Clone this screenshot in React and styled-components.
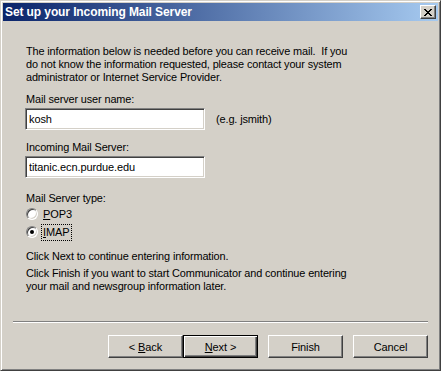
import React from 'react';
import styled, { createGlobalStyle, css } from 'styled-components';

const Global = createGlobalStyle`
  body {
    margin: 0;
    font-family: "Liberation Sans", Arial, sans-serif;
    font-size: 11px;
    color: #000;
  }
`

const Window = styled.div`
  width: 441px;
  height: 371px;
  box-sizing: border-box;
  background: #d4d0c8;
  border: 1px solid;
  border-color: #d4d0c8 #404040 #404040 #d4d0c8;
  box-shadow: inset 1px 1px #fff, inset -1px -1px #808080;
  padding: 2px;
  display: flex;
  flex-direction: column;
`
const TitleBar = styled.div`
  height: 18px;
  flex: none;
  background: linear-gradient(to right, #0a246a, #a6caf0);
  display: flex;
  align-items: center;
  justify-content: space-between;
  padding: 0 2px;
`
const TitleText = styled.span`
  color: #fff;
  font-weight: bold;
  font-size: 12px;
  letter-spacing: -0.1px;
`
const CloseButton = styled.div`
  width: 16px;
  height: 14px;
  box-sizing: border-box;
  background: #d4d0c8;
  border: 1px solid;
  border-color: #fff #404040 #404040 #fff;
  box-shadow: inset -1px -1px #808080;
  display: flex;
  align-items: center;
  justify-content: center;
  padding-top: 1px;
`
const Content = styled.div`
  padding: 24px 23px 0;
`
const Text = styled.div`
  font-size: 10.9px;
  letter-spacing: -0.12px;
  line-height: 13px;
  margin-top: ${p => p.$mt || 0}px;
`
const FieldRow = styled.div`
  display: flex;
  align-items: center;
  gap: 11px;
  margin-top: 2px;
  margin-left: -1px;
`
const TextBox = styled.input`
  width: 180px;
  height: 22px;
  box-sizing: border-box;
  margin: 0;
  padding: 0 3px;
  background: #fff;
  border: 1px solid;
  border-color: #808080 #fff #fff #808080;
  box-shadow: inset 1px 1px #404040, inset -1px -1px #d4d0c8;
  font: 11px "Liberation Sans", Arial, sans-serif;
  letter-spacing: -0.1px;
  color: #000;
  outline: none;
`
const Hint = styled.span`
  letter-spacing: -0.15px;
`
const RadioRow = styled.div`
  height: 18px;
  display: flex;
  align-items: center;
  gap: 4px;
`
const RadioCircle = styled.span`
  width: 12px;
  height: 12px;
  box-sizing: border-box;
  border-radius: 50%;
  background: #fff;
  border: 1px solid;
  border-color: #808080 #fff #fff #808080;
  box-shadow: inset 1px 1px #404040, inset -1px -1px #d4d0c8;
  display: inline-flex;
  align-items: center;
  justify-content: center;
  ${p => p.$checked && css`
    &::after {
      content: '';
      width: 4px;
      height: 4px;
      border-radius: 50%;
      background: #000;
    }
  `}
`
const RadioLabel = styled.span`
  line-height: 15px;
  padding: 0 1px;
  letter-spacing: -0.1px;
  outline: ${p => (p.$focus ? '1px dotted #000' : 'none')};
  outline-offset: 0;
`
const Footer = styled.div`
  margin-top: auto;
  padding: 0 10px 10px;
`
const Separator = styled.div`
  border-top: 1px solid #808080;
  border-bottom: 1px solid #fff;
`
const ButtonRow = styled.div`
  display: flex;
  justify-content: flex-end;
  gap: 10px;
  margin-top: 12px;
`
const ButtonPair = styled.div`
  display: flex;
`
const Button = styled.button`
  width: 75px;
  height: 23px;
  box-sizing: border-box;
  margin: 0;
  padding: 0;
  background: #d4d0c8;
  font: 11px "Liberation Sans", Arial, sans-serif;
  letter-spacing: -0.1px;
  color: #000;
  border: 1px solid;
  border-color: #fff #404040 #404040 #fff;
  box-shadow: inset -1px -1px #808080;
  ${p => p.$default && css`
    border-color: #000;
    box-shadow: inset 1px 1px #fff, inset -1px -1px #404040, inset -2px -2px #808080;
  `}
`

const CloseGlyph = () => (
  <svg width="8" height="7" viewBox="0 0 8 7" shapeRendering="crispEdges">
    <path
      fill="#000"
      d="M0 0h2v1H0zM6 0h2v1H6zM1 1h2v1H1zM5 1h2v1H5zM2 2h4v1H2zM3 3h2v1H3zM2 4h4v1H2zM1 5h2v1H1zM5 5h2v1H5zM0 6h2v1H0zM6 6h2v1H6z"
    />
  </svg>
)

export default function App() {
  return (
    <Window>
      <Global />
      <TitleBar>
        <TitleText>Set up your Incoming Mail Server</TitleText>
        <CloseButton><CloseGlyph /></CloseButton>
      </TitleBar>
      <Content>
        <Text>
          The information below is needed before you can receive mail.&nbsp; If you<br />
          do not know the information requested, please contact your system<br />
          administrator or Internet Service Provider.
        </Text>
        <Text $mt={9}>Mail server user name:</Text>
        <FieldRow>
          <TextBox readOnly value="kosh" />
          <Hint>(e.g. jsmith)</Hint>
        </FieldRow>
        <Text $mt={11}>Incoming Mail Server:</Text>
        <FieldRow>
          <TextBox readOnly value="titanic.ecn.purdue.edu" />
        </FieldRow>
        <Text $mt={14}>Mail Server type:</Text>
        <RadioRow>
          <RadioCircle />
          <RadioLabel><u>P</u>OP3</RadioLabel>
        </RadioRow>
        <RadioRow>
          <RadioCircle $checked />
          <RadioLabel $focus><u>I</u>MAP</RadioLabel>
        </RadioRow>
        <Text $mt={9}>Click Next to continue entering information.</Text>
        <Text $mt={4}>
          Click Finish if you want to start Communicator and continue entering<br />
          your mail and newsgroup information later.
        </Text>
      </Content>
      <Footer>
        <Separator />
        <ButtonRow>
          <ButtonPair>
            <Button>&lt; <u>B</u>ack</Button>
            <Button $default><u>N</u>ext &gt;</Button>
          </ButtonPair>
          <Button>Finish</Button>
          <Button>Cancel</Button>
        </ButtonRow>
      </Footer>
    </Window>
  );
}
